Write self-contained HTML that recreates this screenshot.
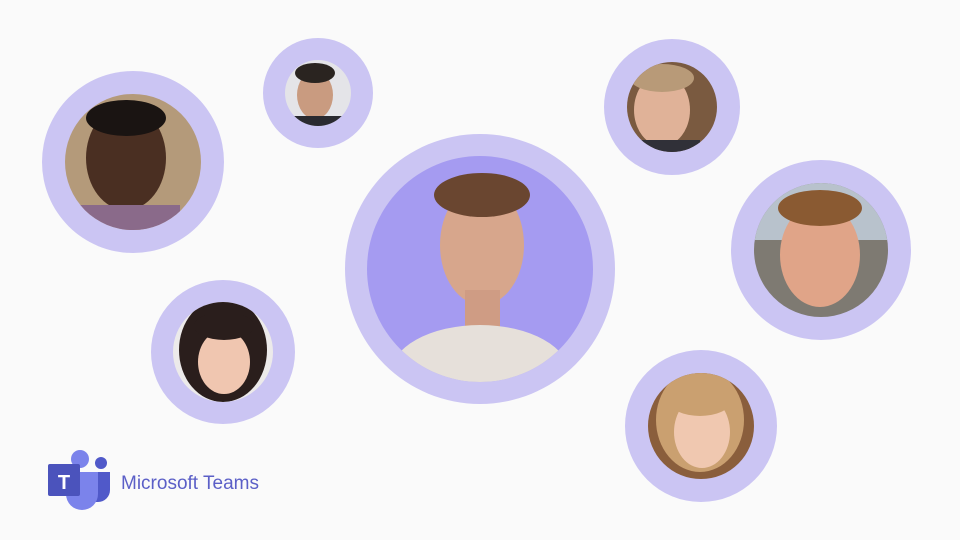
<!DOCTYPE html>
<html><head><style>
body{margin:0;width:960px;height:540px;background:#fafafa;position:relative;overflow:hidden;font-family:"Liberation Sans",sans-serif}
.r{position:absolute;border-radius:50%;background:#cbc5f3}
.p{position:absolute;border-radius:50%;overflow:hidden}
.f{position:absolute;border-radius:50%}
</style></head><body>
<svg width="960" height="540" style="position:absolute;left:0;top:0">
<defs>
<clipPath id="c1"><circle cx="133" cy="162" r="68"/></clipPath>
<clipPath id="c2"><circle cx="318" cy="93" r="33"/></clipPath>
<clipPath id="c3"><circle cx="480" cy="269" r="113"/></clipPath>
<clipPath id="c4"><circle cx="672" cy="107" r="45"/></clipPath>
<clipPath id="c5"><circle cx="821" cy="250" r="67"/></clipPath>
<clipPath id="c6"><circle cx="223" cy="352" r="50"/></clipPath>
<clipPath id="c7"><circle cx="701" cy="426" r="53"/></clipPath>
</defs>
<g fill="#cbc5f3">
<circle cx="133" cy="162" r="91"/><circle cx="318" cy="93" r="55"/><circle cx="480" cy="269" r="135"/>
<circle cx="672" cy="107" r="68"/><circle cx="821" cy="250" r="90"/><circle cx="223" cy="352" r="72"/><circle cx="701" cy="426" r="76"/>
</g>
<g clip-path="url(#c1)"><rect x="60" y="90" width="150" height="150" fill="#b49a7a"/><ellipse cx="126" cy="158" rx="40" ry="52" fill="#4a2f22"/><ellipse cx="126" cy="118" rx="40" ry="18" fill="#1a1412"/><rect x="80" y="205" width="100" height="40" fill="#8a6a8a"/></g>
<g clip-path="url(#c2)"><rect x="280" y="55" width="80" height="80" fill="#e4e4e8"/><ellipse cx="315" cy="95" rx="18" ry="24" fill="#c99b80"/><ellipse cx="315" cy="73" rx="20" ry="10" fill="#2a2420"/><rect x="292" y="116" width="50" height="20" fill="#2a2a30"/></g>
<g clip-path="url(#c3)"><rect x="360" y="150" width="240" height="240" fill="#a59bf1"/><ellipse cx="482" cy="245" rx="42" ry="60" fill="#d7a68c"/><ellipse cx="482" cy="195" rx="48" ry="22" fill="#6a4630"/><rect x="465" y="290" width="35" height="40" fill="#cf9c84"/><ellipse cx="480" cy="375" rx="90" ry="50" fill="#e6e0da"/></g>
<g clip-path="url(#c4)"><rect x="620" y="60" width="100" height="100" fill="#7a5a40"/><ellipse cx="662" cy="110" rx="28" ry="36" fill="#e0b298"/><ellipse cx="662" cy="78" rx="32" ry="14" fill="#b89a78"/><rect x="640" y="140" width="60" height="20" fill="#303038"/></g>
<g clip-path="url(#c5)"><rect x="750" y="180" width="150" height="140" fill="#7e7a72"/><rect x="750" y="180" width="150" height="60" fill="#b8c2cc"/><ellipse cx="820" cy="255" rx="40" ry="52" fill="#e0a488"/><ellipse cx="820" cy="208" rx="42" ry="18" fill="#8a5a32"/></g>
<g clip-path="url(#c6)"><rect x="170" y="300" width="110" height="110" fill="#eceaea"/><ellipse cx="223" cy="350" rx="44" ry="52" fill="#2a1e1c"/><ellipse cx="224" cy="362" rx="26" ry="32" fill="#f0c6b0"/><ellipse cx="224" cy="326" rx="30" ry="14" fill="#2a1e1c"/></g>
<g clip-path="url(#c7)"><rect x="645" y="370" width="115" height="115" fill="#8a5e3c"/><ellipse cx="700" cy="420" rx="44" ry="52" fill="#caa070"/><ellipse cx="702" cy="432" rx="28" ry="36" fill="#f0c8b0"/><ellipse cx="700" cy="402" rx="30" ry="14" fill="#caa070"/></g>
<!-- logo -->
<circle cx="80" cy="459" r="9" fill="#7b83eb"/>
<circle cx="101" cy="463" r="6" fill="#5059c9"/>
<path d="M92 472h18v18a12 12 0 0 1-12 12h-6z" fill="#5059c9"/>
<path d="M66 472h32v22a16 16 0 0 1-32 0z" fill="#7b83eb"/>
<rect x="48" y="464" width="32" height="32" rx="2" fill="#4b53bc"/>
<text x="64" y="489" font-family="Liberation Sans,sans-serif" font-weight="bold" font-size="20" fill="#fff" text-anchor="middle">T</text>
<text x="121" y="489" font-family="Liberation Sans,sans-serif" font-size="19" fill="#5b5fc7">Microsoft Teams</text>
</svg>
</body></html>
